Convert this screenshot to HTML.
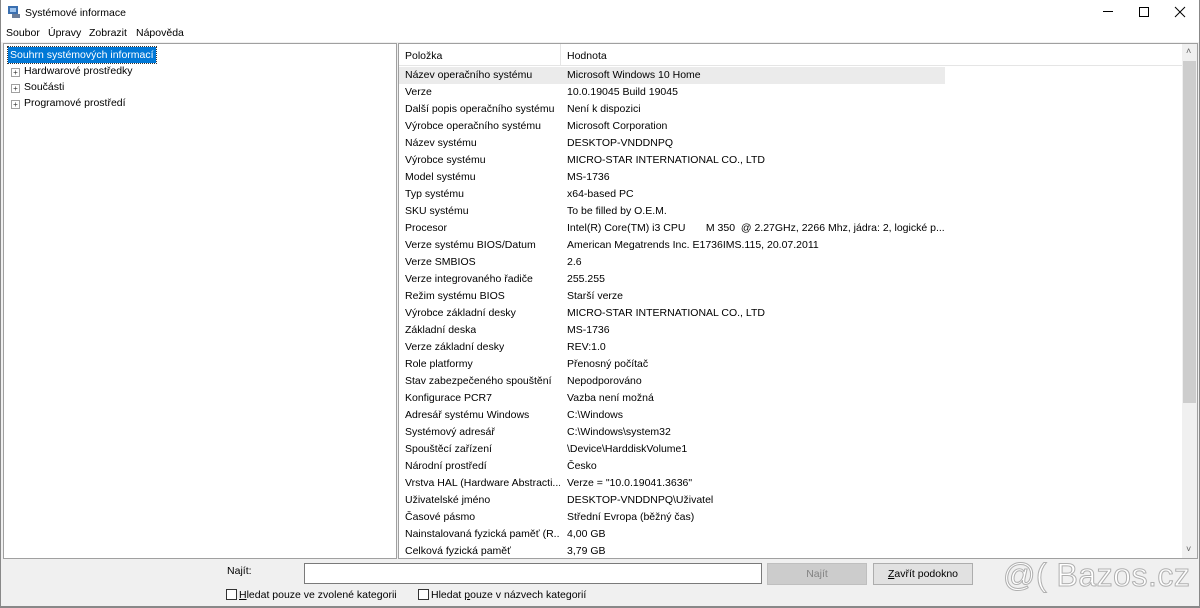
<!DOCTYPE html>
<html><head><meta charset="utf-8"><style>
*{margin:0;padding:0;box-sizing:border-box}
body{width:1200px;height:608px;background:#f0f0f0;font-family:"Liberation Sans",sans-serif;font-size:10.5px;color:#000;position:relative;overflow:hidden}
.a{position:absolute;white-space:nowrap}
#title{position:absolute;left:0;top:0;width:1200px;height:24px;background:#fff}
#menu{position:absolute;left:0;top:24px;width:1200px;height:18px;background:#fff}
#left{position:absolute;left:3px;top:43px;width:394px;height:516px;background:#fff;border:1px solid #a0a0a0}
#right{position:absolute;left:398px;top:43px;width:800px;height:516px;background:#fff;border:1px solid #a0a0a0;overflow:hidden}
.row{position:absolute;left:0;height:17px;line-height:17px;width:546px}
.row span{position:absolute;white-space:nowrap}
.c1{left:6px;max-width:155px;overflow:hidden}.c2{left:168px}
.pl{display:inline-block;width:9px;height:9px;border:1px solid #a0a0a0;position:absolute;font-size:8px;line-height:7px;text-align:center;color:#333}
.cb{display:inline-block;width:11px;height:11px;border:1px solid #333;background:#fff;vertical-align:-2px;margin-right:2px}
</style></head><body>
<div id="title">
<svg class="a" style="left:7px;top:5px" width="14" height="14"><rect x="1" y="1" width="10" height="8" fill="#3a6fb0"/><rect x="3" y="3" width="6" height="4" fill="#9cc3ee"/><rect x="5" y="9" width="8" height="4" fill="#6b7d99"/></svg>
<div class="a" style="left:25px;top:7px">Systémové informace</div>
<div class="a" style="left:1103px;top:11px;width:10px;height:1px;background:#000"></div>
<div class="a" style="left:1139px;top:7px;width:10px;height:10px;border:1px solid #000"></div>
<svg class="a" style="left:1174px;top:6px" width="12" height="12"><path d="M1 1L11 11M11 1L1 11" stroke="#000" stroke-width="1"/></svg>
</div>
<div id="menu">
<div class="a" style="left:6px;top:3px">Soubor</div>
<div class="a" style="left:48px;top:3px">Úpravy</div>
<div class="a" style="left:89px;top:3px">Zobrazit</div>
<div class="a" style="left:136px;top:3px">Nápověda</div>
</div>
<div id="left">
<div class="a" style="left:4px;top:3px;height:16px;background:#0078d7;color:#fff;line-height:16px;padding:0 2px;outline:1px dotted #333">Souhrn systémových informací</div>
<span class="pl" style="left:7px;top:24px">+</span><div class="a" style="left:20px;top:21px">Hardwarové prostředky</div>
<span class="pl" style="left:7px;top:40px">+</span><div class="a" style="left:20px;top:37px">Součásti</div>
<span class="pl" style="left:7px;top:56px">+</span><div class="a" style="left:20px;top:53px">Programové prostředí</div>
</div>
<div id="right">
<div class="a" style="left:0;top:0;width:783px;height:22px;background:#fff;border-bottom:1px solid #e5e5e5"></div>
<div class="a" style="left:161px;top:0;width:1px;height:22px;background:#e5e5e5"></div>
<div class="a" style="left:6px;top:6px">Položka</div>
<div class="a" style="left:168px;top:6px">Hodnota</div>
<div class="row" style="top:23px;background:#ebebeb"><span class="c1">Název operačního systému</span><span class="c2">Microsoft Windows 10 Home</span></div>
<div class="row" style="top:40px"><span class="c1">Verze</span><span class="c2">10.0.19045 Build 19045</span></div>
<div class="row" style="top:57px"><span class="c1">Další popis operačního systému</span><span class="c2">Není k dispozici</span></div>
<div class="row" style="top:74px"><span class="c1">Výrobce operačního systému</span><span class="c2">Microsoft Corporation</span></div>
<div class="row" style="top:91px"><span class="c1">Název systému</span><span class="c2">DESKTOP-VNDDNPQ</span></div>
<div class="row" style="top:108px"><span class="c1">Výrobce systému</span><span class="c2">MICRO-STAR INTERNATIONAL CO., LTD</span></div>
<div class="row" style="top:125px"><span class="c1">Model systému</span><span class="c2">MS-1736</span></div>
<div class="row" style="top:142px"><span class="c1">Typ systému</span><span class="c2">x64-based PC</span></div>
<div class="row" style="top:159px"><span class="c1">SKU systému</span><span class="c2">To be filled by O.E.M.</span></div>
<div class="row" style="top:176px"><span class="c1">Procesor</span><span class="c2">Intel(R) Core(TM) i3 CPU&nbsp;&nbsp;&nbsp;&nbsp;&nbsp;&nbsp; M 350&nbsp; @ 2.27GHz, 2266 Mhz, jádra: 2, logické p...</span></div>
<div class="row" style="top:193px"><span class="c1">Verze systému BIOS/Datum</span><span class="c2">American Megatrends Inc. E1736IMS.115, 20.07.2011</span></div>
<div class="row" style="top:210px"><span class="c1">Verze SMBIOS</span><span class="c2">2.6</span></div>
<div class="row" style="top:227px"><span class="c1">Verze integrovaného řadiče</span><span class="c2">255.255</span></div>
<div class="row" style="top:244px"><span class="c1">Režim systému BIOS</span><span class="c2">Starší verze</span></div>
<div class="row" style="top:261px"><span class="c1">Výrobce základní desky</span><span class="c2">MICRO-STAR INTERNATIONAL CO., LTD</span></div>
<div class="row" style="top:278px"><span class="c1">Základní deska</span><span class="c2">MS-1736</span></div>
<div class="row" style="top:295px"><span class="c1">Verze základní desky</span><span class="c2">REV:1.0</span></div>
<div class="row" style="top:312px"><span class="c1">Role platformy</span><span class="c2">Přenosný počítač</span></div>
<div class="row" style="top:329px"><span class="c1">Stav zabezpečeného spouštění</span><span class="c2">Nepodporováno</span></div>
<div class="row" style="top:346px"><span class="c1">Konfigurace PCR7</span><span class="c2">Vazba není možná</span></div>
<div class="row" style="top:363px"><span class="c1">Adresář systému Windows</span><span class="c2">C:\Windows</span></div>
<div class="row" style="top:380px"><span class="c1">Systémový adresář</span><span class="c2">C:\Windows\system32</span></div>
<div class="row" style="top:397px"><span class="c1">Spouštěcí zařízení</span><span class="c2">\Device\HarddiskVolume1</span></div>
<div class="row" style="top:414px"><span class="c1">Národní prostředí</span><span class="c2">Česko</span></div>
<div class="row" style="top:431px"><span class="c1">Vrstva HAL (Hardware Abstracti...</span><span class="c2">Verze = "10.0.19041.3636"</span></div>
<div class="row" style="top:448px"><span class="c1">Uživatelské jméno</span><span class="c2">DESKTOP-VNDDNPQ\Uživatel</span></div>
<div class="row" style="top:465px"><span class="c1">Časové pásmo</span><span class="c2">Střední Evropa (běžný čas)</span></div>
<div class="row" style="top:482px"><span class="c1">Nainstalovaná fyzická paměť (R...</span><span class="c2">4,00 GB</span></div>
<div class="row" style="top:499px"><span class="c1">Celková fyzická paměť</span><span class="c2">3,79 GB</span></div>
<div class="a" style="left:783px;top:0;width:16px;height:514px;background:#f0f0f0"></div>
<div class="a" style="left:784px;top:17px;width:13px;height:342px;background:#cdcdcd"></div>
<div class="a" style="left:787px;top:2px;font-size:9px;color:#606060">˄</div>
<div class="a" style="left:787px;top:500px;font-size:9px;color:#606060">˅</div>
</div>
<div class="a" style="left:227px;top:565px">Na<u>j</u>ít:</div>
<div class="a" style="left:304px;top:563px;width:458px;height:21px;background:#fff;border:1px solid #7a7a7a"></div>
<div class="a" style="left:767px;top:563px;width:100px;height:22px;background:#cccccc;border:1px solid #bfbfbf;color:#838383;text-align:center;line-height:20px">Najít</div>
<div class="a" style="left:873px;top:563px;width:100px;height:22px;background:#e1e1e1;border:1px solid #adadad;text-align:center;line-height:20px"><u>Z</u>avřít podokno</div>
<div class="a" style="left:1003px;top:557px;font-size:32px;color:#fff;-webkit-text-stroke:1px #b0b0b0;letter-spacing:0.5px">@( Bazos.cz</div>
<div class="a" style="left:226px;top:589px"><span class="cb"></span><u>H</u>ledat pouze ve zvolené kategorii</div>
<div class="a" style="left:418px;top:589px"><span class="cb"></span>Hledat <u>p</u>ouze v názvech kategorií</div>
<div class="a" style="left:0;top:0;width:1px;height:608px;background:#888"></div>
<div class="a" style="left:1199px;top:0;width:1px;height:608px;background:#888"></div>
<div class="a" style="left:0;top:606px;width:1200px;height:2px;background:#888"></div>
</body></html>
